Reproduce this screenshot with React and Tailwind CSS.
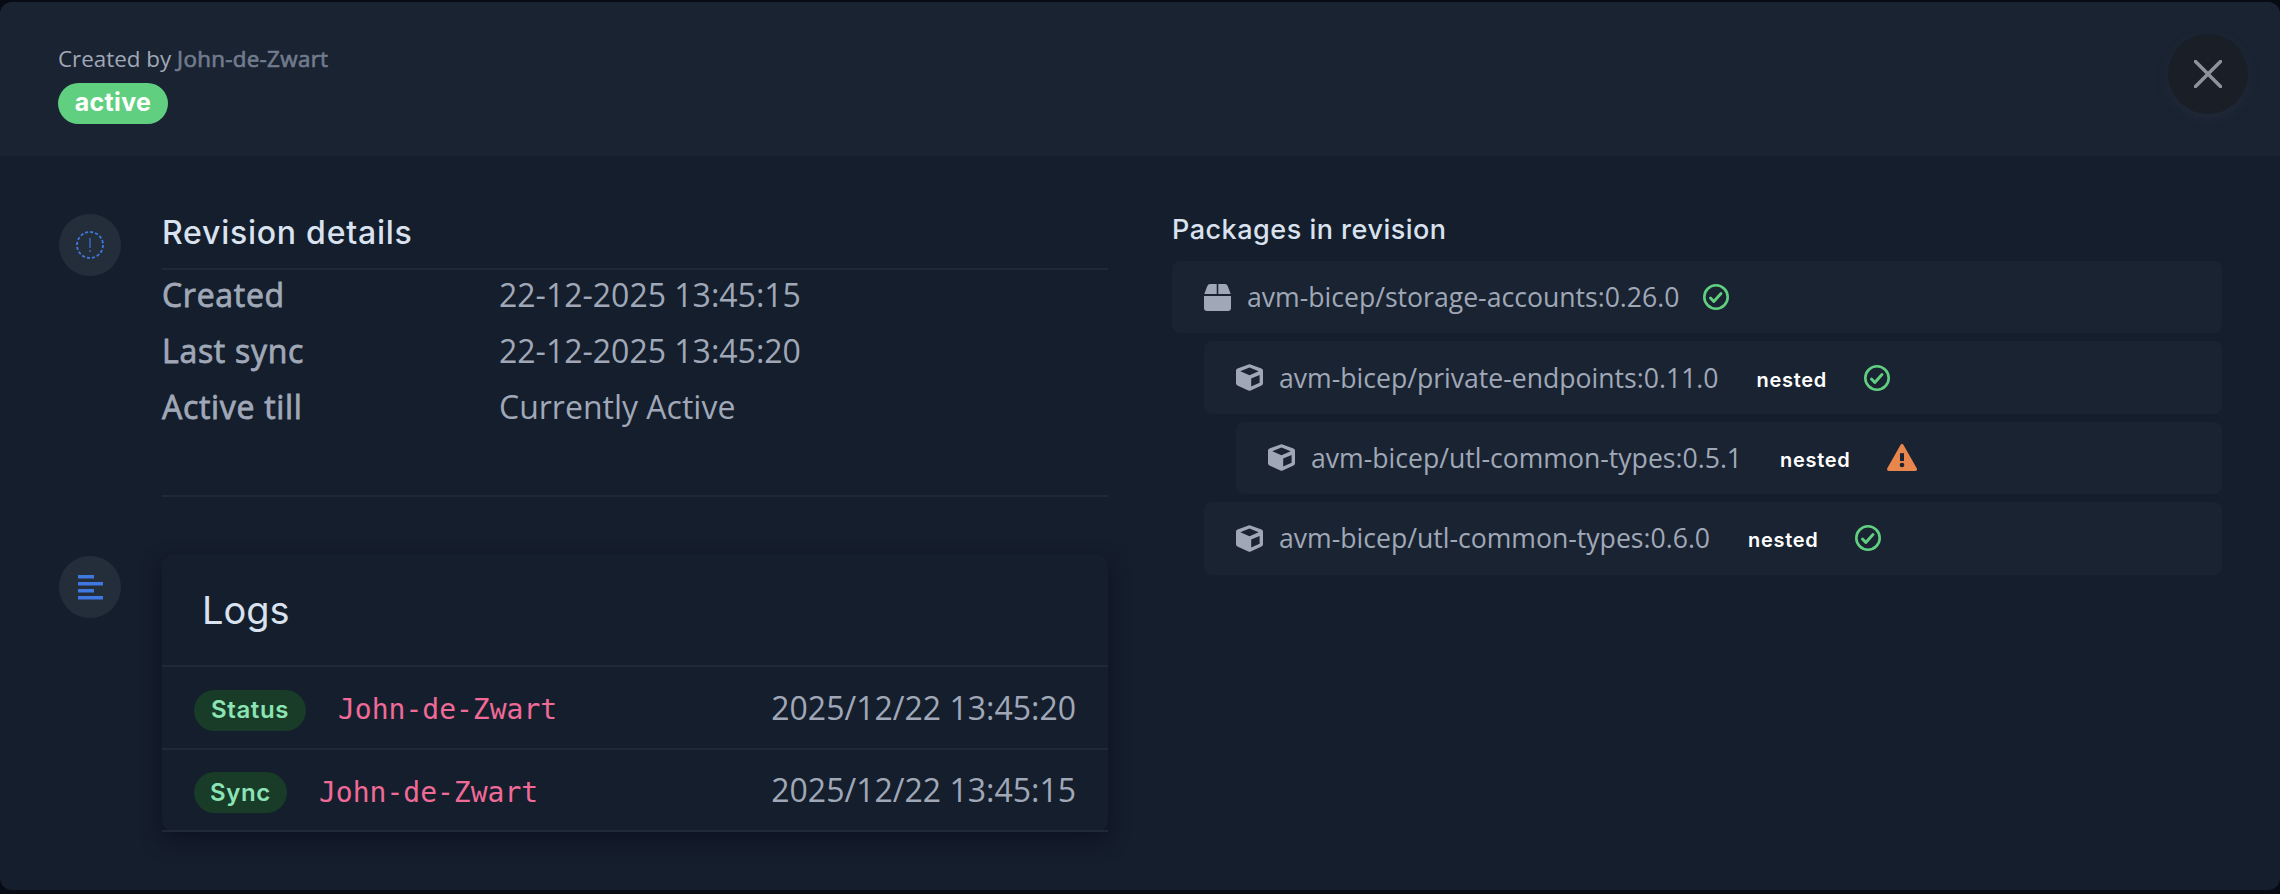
const details = [
  { label: 'Created', value: '22-12-2025 13:45:15' },
  { label: 'Last sync', value: '22-12-2025 13:45:20' },
  { label: 'Active till', value: 'Currently Active' },
];

const logs = [
  { type: 'Status', user: 'John-de-Zwart', time: '2025/12/22 13:45:20', badgeWidth: 'w-[112px]' },
  { type: 'Sync', user: 'John-de-Zwart', time: '2025/12/22 13:45:15', badgeWidth: 'w-[93px]' },
];

const packages = [
  { name: 'avm-bicep/storage-accounts:0.26.0', nested: false, ok: true, indent: '' },
  { name: 'avm-bicep/private-endpoints:0.11.0', nested: true, ok: true, indent: 'ml-8' },
  { name: 'avm-bicep/utl-common-types:0.5.1', nested: true, ok: false, indent: 'ml-16' },
  { name: 'avm-bicep/utl-common-types:0.6.0', nested: true, ok: true, indent: 'ml-8' },
];

function BoxIcon() {
  return (
    <svg viewBox="0 0 27 27" className="size-[27px] shrink-0" fill="currentColor">
      <path d="M6.200 0H12.700V10H.3L3.200 2.200Q4 0 6.200 0ZM14.300 0H20.800Q23 0 23.800 2.200L26.700 10H14.300ZM0 12H27V24Q27 27 24 27H3Q0 27 0 24Z" />
    </svg>
  );
}

function CubeIcon() {
  return (
    <svg viewBox="0 0 27 27" className="size-[27px] shrink-0" fill="currentColor">
      <path
        fillRule="evenodd"
        d="M12.500.4Q13.500 0 14.500.4L25.500 4.500Q27 5.100 27 6.700V19.300Q27 20.800 25.600 21.500L14.700 26.500Q13.500 27 12.300 26.500L1.400 21.500Q0 20.800 0 19.300V6.700Q0 5.100 1.500 4.500ZM13.500 3.600 4.300 7.200 13.500 11.200 22.700 7.200ZM15.200 14.600V22.600L23.600 18.700V10.900Z"
      />
    </svg>
  );
}

function CheckIcon() {
  return (
    <svg viewBox="0 0 26 26" className="size-[26px] shrink-0 text-[#60d080]" fill="none" stroke="currentColor">
      <circle cx="13" cy="13" r="11.700" strokeWidth="2.600" />
      <path d="m7.500 14 3.300 3.400 7.200-7.900" strokeWidth="2.900" strokeLinecap="round" strokeLinejoin="round" />
    </svg>
  );
}

function WarningIcon() {
  return (
    <svg viewBox="0 0 30 27" className="h-[27px] w-[30px] shrink-0" fill="none">
      <path d="M15 1.800 28.200 25.200H1.800Z" fill="#e8864e" stroke="#e8864e" strokeWidth="3.500" strokeLinejoin="round" />
      <path d="M15 9.200V17" stroke="#1a2331" strokeWidth="4" />
      <circle cx="15" cy="21" r="2.300" fill="#1a2331" />
    </svg>
  );
}

function StepIcon({ children }) {
  return (
    <div className="flex size-[62px] shrink-0 items-center justify-center rounded-full bg-[#242e3a]">
      {children}
    </div>
  );
}

function RevisionDetails() {
  return (
    <section className="flex gap-[41px]">
      <div className="pt-[18px]">
        <StepIcon>
          <svg viewBox="0 0 28 28" className="size-7" fill="none">
            <circle cx="14" cy="14" r="13" stroke="#3f78e0" strokeWidth="1.800" strokeDasharray="3.100 1.984" />
            <path d="M14 7V17M14 19V21" stroke="#31589c" strokeWidth="2" />
          </svg>
        </StepIcon>
      </div>
      <div className="h-[301px] flex-1 border-b-2 border-[#202938]">
        <h3 className="h-[74px] border-b-2 border-[#202938] pt-[14px] font-['Inter',sans-serif] text-[32px] leading-[46px] font-medium tracking-[0.75px] text-[#d9e2ee]">
          Revision details
        </h3>
        {details.map((row) => (
          <div key={row.label} className="flex h-14 text-[32px] leading-[50px] text-[#a0a8b8]">
            <span className="w-[337px] tracking-[0.7px] [-webkit-text-stroke:0.8px]">{row.label}</span>
            <span>{row.value}</span>
          </div>
        ))}
      </div>
    </section>
  );
}

function Logs() {
  return (
    <section className="flex gap-[41px] pt-[57px]">
      <div className="pt-[2px]">
        <StepIcon>
          <svg viewBox="0 0 25 25" className="size-[25px]" fill="#3f78e0">
            <rect x="0" y="0" width="16" height="3.500" />
            <rect x="0" y="7" width="25" height="3.500" />
            <rect x="0" y="14" width="16" height="3.500" />
            <rect x="0" y="21" width="25" height="3.500" />
          </svg>
        </StepIcon>
      </div>
      <div className="flex-1 rounded-xl bg-[#151e2c] shadow-[0_8px_20px_rgba(8,10,28,0.6)]">
        <h3 className="h-[113px] border-b-2 border-[#202938] pt-[31px] pl-10 font-['Inter',sans-serif] text-[38px] leading-[50px] text-[#d9e2ee]">
          Logs
        </h3>
        {logs.map((log) => (
          <div key={log.type} className="flex h-[82.500px] items-center border-b-2 border-[#202938] pr-8 pl-8">
            <span
              className={`mt-[6px] mr-8 flex h-[41px] items-center justify-center rounded-full bg-[#183c28] font-['Inter',sans-serif] text-[24px] font-semibold tracking-[0.6px] text-[#8ce4b4] ${log.badgeWidth}`}
            >
              {log.type}
            </span>
            <span className="pt-[6px] font-['DejaVu_Sans_Mono',monospace] text-[28px] text-[#f06a98]">{log.user}</span>
            <span className="ml-auto pt-px text-[32px] text-[#a0a8b8]">{log.time}</span>
          </div>
        ))}
      </div>
    </section>
  );
}

function PackageRow({ pkg }) {
  return (
    <div className={`flex h-[72.400px] items-center rounded-lg bg-[#1a2331] pl-8 text-[#a0a8b8] ${pkg.indent}`}>
      {pkg.nested ? <CubeIcon /> : <BoxIcon />}
      <span className="mr-6 ml-4 pt-[2px] text-[26.600px]">{pkg.name}</span>
      {pkg.nested && (
        <span className="mt-1 mr-[37px] ml-[14px] w-[70px] font-['Inter',sans-serif] text-[20px] font-semibold tracking-[0.7px] text-white">
          nested
        </span>
      )}
      {pkg.ok ? <CheckIcon /> : <WarningIcon />}
    </div>
  );
}

export default function App() {
  return (
    <div className="h-[894px] w-[2280px] bg-[#060b14] pt-[2px] pb-1 font-['Open_Sans',sans-serif]">
      <div className="h-full overflow-hidden rounded-xl bg-[#151e2c]">
        <header className="flex h-[154px] items-start justify-between bg-[#1a2331] pr-8 pl-[58px]">
          <div className="pt-10">
            <p className="h-[41px] text-[22.400px] leading-[34px] text-[#a0a8b8]">
              Created by{' '}
              <span className="tracking-[0.3px] text-[#717b8d] [-webkit-text-stroke:0.7px]">John-de-Zwart</span>
            </p>
            <span className="flex h-[41px] w-[110px] items-center justify-center rounded-full bg-[#60d080] pb-[2px] font-['Inter',sans-serif] text-[25px] font-bold tracking-[0.3px] text-white">
              active
            </span>
          </div>
          <button className="mt-8 flex size-20 items-center justify-center rounded-full bg-[#1a1e26] shadow-[0_4px_12px_rgba(50,60,75,0.3)]">
            <svg viewBox="0 0 28 28" className="size-7" stroke="#8e929c" strokeWidth="3.500" strokeLinecap="round">
              <path d="M1.500 1.500 26.500 26.500M26.500 1.500 1.500 26.500" />
            </svg>
          </button>
        </header>

        <main className="flex gap-16 pt-10 pr-[58px] pl-[59px]">
          <div className="w-[1049px]">
            <RevisionDetails />
            <Logs />
          </div>
          <div className="flex-1 pt-2">
            <h4 className="h-[57px] pt-2 font-['Inter',sans-serif] text-[27px] leading-[36px] font-medium tracking-[0.5px] text-[#d9e2ee]">
              Packages in revision
            </h4>
            <div className="flex flex-col gap-2">
              {packages.map((pkg) => (
                <PackageRow key={pkg.name} pkg={pkg} />
              ))}
            </div>
          </div>
        </main>
      </div>
    </div>
  );
}
